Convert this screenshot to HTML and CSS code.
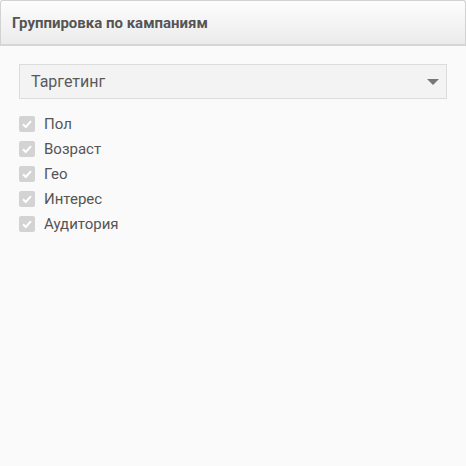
FILE: index.html
```html
<!DOCTYPE html>
<html>
<head>
<meta charset="utf-8">
<link rel="stylesheet" href="styles.css">
</head>
<body>
<div class="panel">
  <div class="header">Группировка по кампаниям</div>
  <div class="content">
    <div class="select">
      <span class="select-text">Таргетинг</span>
      <span class="caret"></span>
    </div>
    <ul class="checks">
      <li class="check"><span class="box"><svg width="16" height="16" viewBox="0 0 16 16"><path d="M4 8.3 L6.8 11 L12 5.2" fill="none" stroke="#fff" stroke-width="2"/></svg></span><span class="label">Пол</span></li>
      <li class="check"><span class="box"><svg width="16" height="16" viewBox="0 0 16 16"><path d="M4 8.3 L6.8 11 L12 5.2" fill="none" stroke="#fff" stroke-width="2"/></svg></span><span class="label">Возраст</span></li>
      <li class="check"><span class="box"><svg width="16" height="16" viewBox="0 0 16 16"><path d="M4 8.3 L6.8 11 L12 5.2" fill="none" stroke="#fff" stroke-width="2"/></svg></span><span class="label">Гео</span></li>
      <li class="check"><span class="box"><svg width="16" height="16" viewBox="0 0 16 16"><path d="M4 8.3 L6.8 11 L12 5.2" fill="none" stroke="#fff" stroke-width="2"/></svg></span><span class="label">Интерес</span></li>
      <li class="check"><span class="box"><svg width="16" height="16" viewBox="0 0 16 16"><path d="M4 8.3 L6.8 11 L12 5.2" fill="none" stroke="#fff" stroke-width="2"/></svg></span><span class="label">Аудитория</span></li>
    </ul>
  </div>
</div>
</body>
</html>
```
FILE: styles.css
```css
html, body {
  margin: 0;
  padding: 0;
  background: #fafafa;
  font-family: Roboto, "Liberation Sans", sans-serif;
}
.panel {
  width: 466px;
  height: 466px;
  background: #fafafa;
}
.header {
  height: 46px;
  box-sizing: border-box;
  padding: 13px 0 0 11px;
  background: linear-gradient(#fdfdfd, #ebebeb);
  border: 1px solid #d2d2d2;
  border-bottom: 2px solid #d6d6d6;
  border-radius: 3px 3px 0 0;
  font-size: 15px;
  font-weight: bold;
  color: #555;
  line-height: 18px;
}
.content {
  padding: 18px 19px 0 19px;
}
.select {
  height: 35px;
  box-sizing: border-box;
  border: 1px solid #dcdcdc;
  background: #f3f3f3;
  display: flex;
  align-items: center;
  justify-content: space-between;
  padding: 0 7px 0 11px;
}
.select-text {
  font-size: 16px;
  color: #5a5a5a;
}
.caret {
  width: 0;
  height: 0;
  border-left: 6px solid transparent;
  border-right: 6px solid transparent;
  border-top: 6px solid #777;
}
.checks {
  list-style: none;
  margin: 17px 0 0 0;
  padding: 0;
  display: flex;
  flex-direction: column;
  gap: 9px;
}
.check {
  display: flex;
  align-items: center;
  height: 16px;
}
.box {
  width: 16px;
  height: 16px;
  border-radius: 2px;
  background: #d3d3d3;
  display: block;
  margin-right: 9px;
}
.box svg { display: block; }
.label {
  font-size: 15px;
  color: #555;
}
```
